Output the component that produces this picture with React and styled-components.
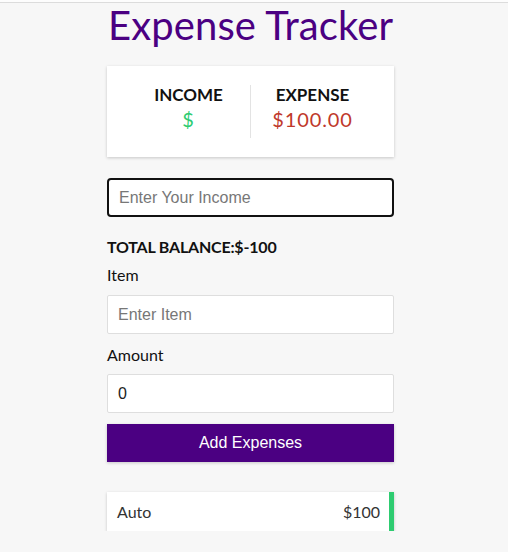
import React from "react";
import styled, { createGlobalStyle } from "styled-components";

const GlobalStyle = createGlobalStyle`
  * { box-sizing: border-box; }
  html, body {
    margin: 0;
    background: #f7f7f7;
    font-family: Lato, "Open Sans", sans-serif;
  }
  body {
    border-top: 2px solid #fdfdfd;
  }
`;

const TopLine = styled.div`
  height: 1px;
  background: #dcdcdc;
`;

const Container = styled.div`
  width: 287px;
  margin-left: 107px;
  padding-top: 2px;
`;

const Title = styled.h1`
  margin: 0 0 0 1px;
  font-size: 40px;
  font-weight: 400;
  line-height: 40px;
  color: #4b0082;
  letter-spacing: 0.1px;
`;

const Summary = styled.div`
  margin-top: 21px;
  background: #fff;
  box-shadow: 0 1px 3px rgba(0, 0, 0, 0.2);
  height: 91px;
  display: flex;
  align-items: center;
  padding: 0 20px;
`;

const SummaryCol = styled.div`
  flex: 1;
  text-align: center;
  height: 53px;
  padding-top: 1px;
  ${(p) => p.$divider && "border-right: 1px solid #e3e3e3;"}
`;

const SummaryLabel = styled.h4`
  margin: 0;
  font-size: 17px;
  font-weight: 700;
  color: #111;
  line-height: 18px;
`;

const Money = styled.p`
  margin: 3px 0 0;
  font-size: 20px;
  letter-spacing: 0.9px;
  line-height: 24px;
  color: ${(p) => (p.$plus ? "#2ecc71" : "#c0392b")};
`;

const Input = styled.input`
  display: block;
  width: 100%;
  height: 39px;
  margin-top: ${(p) => p.$mt || 0}px;
  padding: 0 10px;
  font-family: "Liberation Sans", Arial, sans-serif;
  font-size: 16px;
  color: #222;
  background: #fff;
  border: 1px solid #dedede;
  border-radius: 2px;
  outline: none;
  &::placeholder {
    color: #777;
  }
  &.focused {
    border: 2px solid #111;
    border-radius: 4px;
  }
`;

const Balance = styled.h4`
  margin: 20px 0 0;
  font-size: 16px;
  font-weight: 700;
  line-height: 20px;
  color: #111;
  letter-spacing: -0.2px;
`;

const Label = styled.label`
  display: block;
  margin-top: ${(p) => p.$mt}px;
  font-size: 16px;
  line-height: 20px;
  color: #111;
`;

const Button = styled.button`
  display: block;
  width: 100%;
  height: 38px;
  margin-top: 11px;
  border: none;
  background: #4b0082;
  color: #fff;
  font-family: "Liberation Sans", Arial, sans-serif;
  font-size: 16px;
  box-shadow: 0 1px 3px rgba(0, 0, 0, 0.2);
`;

const List = styled.ul`
  list-style: none;
  margin: 30px 0 0;
  padding: 0;
`;

const ListItem = styled.li`
  display: flex;
  justify-content: space-between;
  align-items: center;
  height: 39px;
  padding: 0 9px 0 10px;
  background: #fff;
  color: #333;
  font-size: 16px;
  box-shadow: 0 1px 3px rgba(0, 0, 0, 0.2);
  border-right: 5px solid #2ecc71;
`;

export default function App() {
  return (
    <>
      <GlobalStyle />
      <TopLine />
      <Container>
        <Title>Expense Tracker</Title>
        <Summary>
          <SummaryCol $divider>
            <SummaryLabel>INCOME</SummaryLabel>
            <Money $plus>$</Money>
          </SummaryCol>
          <SummaryCol>
            <SummaryLabel>EXPENSE</SummaryLabel>
            <Money>$100.00</Money>
          </SummaryCol>
        </Summary>
        <Input className="focused" $mt={21} placeholder="Enter Your Income" />
        <Balance>TOTAL BALANCE:$-100</Balance>
        <Label $mt={8}>Item</Label>
        <Input $mt={10} placeholder="Enter Item" />
        <Label $mt={11}>Amount</Label>
        <Input $mt={9} defaultValue="0" />
        <Button>Add Expenses</Button>
        <List>
          <ListItem>
            <span>Auto</span>
            <span>$100</span>
          </ListItem>
        </List>
      </Container>
    </>
  );
}
